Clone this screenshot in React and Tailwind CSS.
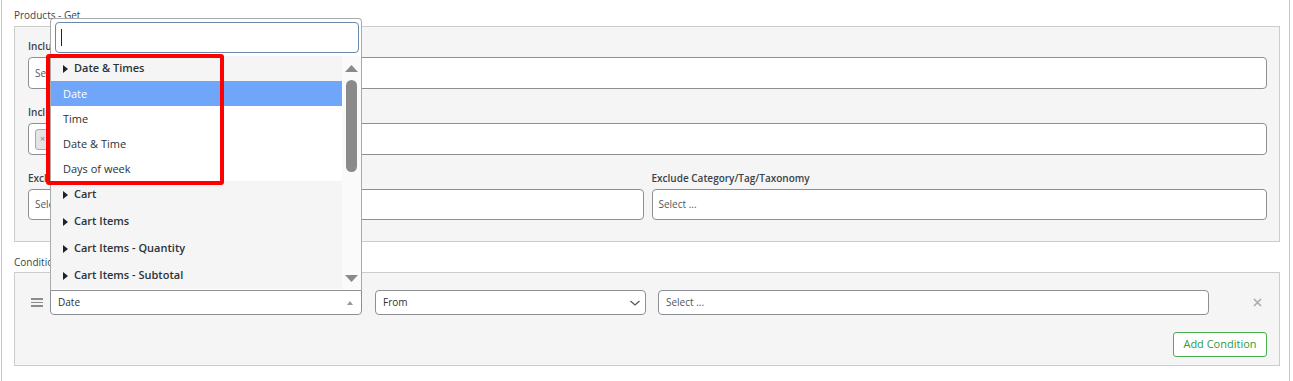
import React from 'react';

const Caret = ({ className }) => (
  <svg className={className} width="5" height="8" viewBox="0 0 5 8">
    <polygon points="0,0 5,4 0,8" fill="currentColor" />
  </svg>
);

function Field({ label, children, className = '' }) {
  return (
    <div className={className}>
      <div className="text-[10px] leading-[12px] font-semibold text-[#3c434a] mb-[5px]">{label}</div>
      {children}
    </div>
  );
}

function SelectBox({ h = 'h-[32px]', children }) {
  return (
    <div className={`${h} w-full bg-white border border-[#8c8f94] rounded-[4px] flex items-center pl-[6px] text-[10px] text-[#50575e]`}>
      {children}
    </div>
  );
}

function Option({ label, active }) {
  return (
    <div
      className={`h-[25px] flex items-center pl-[12px] pt-px text-[11px] ${
        active ? 'bg-[#70a6fa] text-white' : 'bg-white text-[#2c3338]'
      }`}
    >
      {label}
    </div>
  );
}

function Group({ label, h = 'h-[27px]' }) {
  return (
    <div className={`${h} flex items-center pl-[12px] bg-[#f5f5f5] text-[11px] font-semibold text-[#2c3338]`}>
      <Caret className="mr-[6px] text-[#1d2327]" />
      {label}
    </div>
  );
}

export default function App() {
  return (
    <div className="relative w-[1293px] h-[381px] overflow-hidden bg-white font-['Open_Sans',sans-serif]">
      <div className="ml-px w-[1289px] h-full border-x border-[#c3c4c7] pl-[12px] pr-[9px]">
        <div className="pt-[9px] mb-[5px] text-[10px] leading-[12px] text-[#3c434a]">Products - Get</div>

        <div className="border border-[#cccccc] bg-[#f5f5f5] pt-[13px] pl-[13px] pr-[12px] pb-[21px]">
          <Field label="Include Products">
            <SelectBox>Select ...</SelectBox>
          </Field>
          <Field label="Include Category/Tag/Taxonomy" className="mt-[17px]">
            <SelectBox>
              <span className="h-[21px] pl-[4px] pr-[6px] flex items-center bg-[#e4e4e4] border border-[#aaaaaa] rounded-[3px] text-[9px] text-[#888]">
                ×<span className="ml-[4px] text-[#2c3338]">Accessories</span>
              </span>
            </SelectBox>
          </Field>
          <div className="mt-[17px] grid grid-cols-2 gap-[8px]">
            <Field label="Exclude Products">
              <SelectBox h="h-[31px]">Select ...</SelectBox>
            </Field>
            <Field label="Exclude Category/Tag/Taxonomy">
              <SelectBox h="h-[31px]">Select ...</SelectBox>
            </Field>
          </div>
        </div>

        <div className="mt-[14px] mb-[4px] text-[10px] leading-[12px] text-[#3c434a]">Conditions</div>

        <div className="border border-[#cccccc] bg-[#f5f5f5] pt-[17px] pl-[16px] pr-[12px] pb-[8px]">
          <div className="flex items-center h-[25px]">
            <div className="w-[12px] flex flex-col gap-[2px]">
              <span className="h-[1.5px] bg-[#8c8c8c]" />
              <span className="h-[1.5px] bg-[#8c8c8c]" />
              <span className="h-[1.5px] bg-[#8c8c8c]" />
            </div>
            <div className="ml-[7px] w-[312px] h-[25px] bg-white border border-[#8c8f94] rounded-b-[4px] flex items-center justify-between pl-[7px] pr-[8px] text-[10px] text-[#2c3338]">
              Date
              <svg width="6" height="4" viewBox="0 0 6 4"><polygon points="0,4 3,0 6,4" fill="#999" /></svg>
            </div>
            <div className="ml-[13px] w-[271px] h-[25px] bg-white border border-[#8c8f94] rounded-[4px] flex items-center justify-between pl-[7px] pr-[4px] text-[10px] text-[#2c3338]">
              From
              <svg width="12" height="8" viewBox="0 0 12 8"><path d="M1.5 2 L6 6 L10.5 2" fill="none" stroke="#555" strokeWidth="1.2" /></svg>
            </div>
            <div className="ml-[12px] w-[551px] h-[25px] bg-white border border-[#8c8f94] rounded-[4px] flex items-center pl-[7px] text-[10px] text-[#50575e]">
              Select ...
            </div>
            <svg className="ml-[44px]" width="9" height="9" viewBox="0 0 9 9">
              <path d="M1 1 L8 8 M8 1 L1 8" stroke="#aaaaaa" strokeWidth="1.6" />
            </svg>
          </div>
          <div className="mt-[17px] flex justify-end">
            <button className="w-[94px] h-[25px] bg-white border border-[#4ab04f] rounded-[3px] text-[11px] text-[#2f9a3f]">
              Add Condition
            </button>
          </div>
        </div>
      </div>

      {/* open select2 dropdown */}
      <div className="absolute left-[50px] top-[18px] w-[312px] h-[272px] bg-white border-x border-t border-[#aaaaaa] rounded-t-[4px] z-10">
        <div className="pt-[3px] pl-[4px] pr-[2px]">
          <div className="h-[31px] w-[304px] border border-[#6a88a8] rounded-[4px] flex items-center pl-[5px]">
            <span className="w-px h-[17px] bg-[#1d2327]" />
          </div>
        </div>
        <div className="mt-[3px] flex">
          <div className="w-[291px]">
            <Group label="Date & Times" h="h-[25px]" />
            <Option label="Date" active />
            <Option label="Time" />
            <Option label="Date & Time" />
            <Option label="Days of week" />
            <Group label="Cart" />
            <Group label="Cart Items" />
            <Group label="Cart Items - Quantity" />
            <Group label="Cart Items - Subtotal" />
          </div>
          <div className="w-[19px] h-[233px] bg-[#fafafa] flex flex-col items-center pt-[9px]">
            <svg width="13" height="7" viewBox="0 0 13 7"><polygon points="0,7 6.5,0 13,7" fill="#8a8a8a" /></svg>
            <div className="mt-[8px] w-[11px] h-[92px] rounded-full bg-[#8a8a8a]" />
            <svg className="mt-[103px]" width="13" height="7" viewBox="0 0 13 7"><polygon points="0,0 6.5,7 13,0" fill="#8a8a8a" /></svg>
          </div>
        </div>
      </div>

      {/* highlight box */}
      <div className="absolute left-[46px] top-[54px] w-[178px] h-[131px] border-4 border-[#fe0000] rounded-[3px] z-20" />
    </div>
  );
}
